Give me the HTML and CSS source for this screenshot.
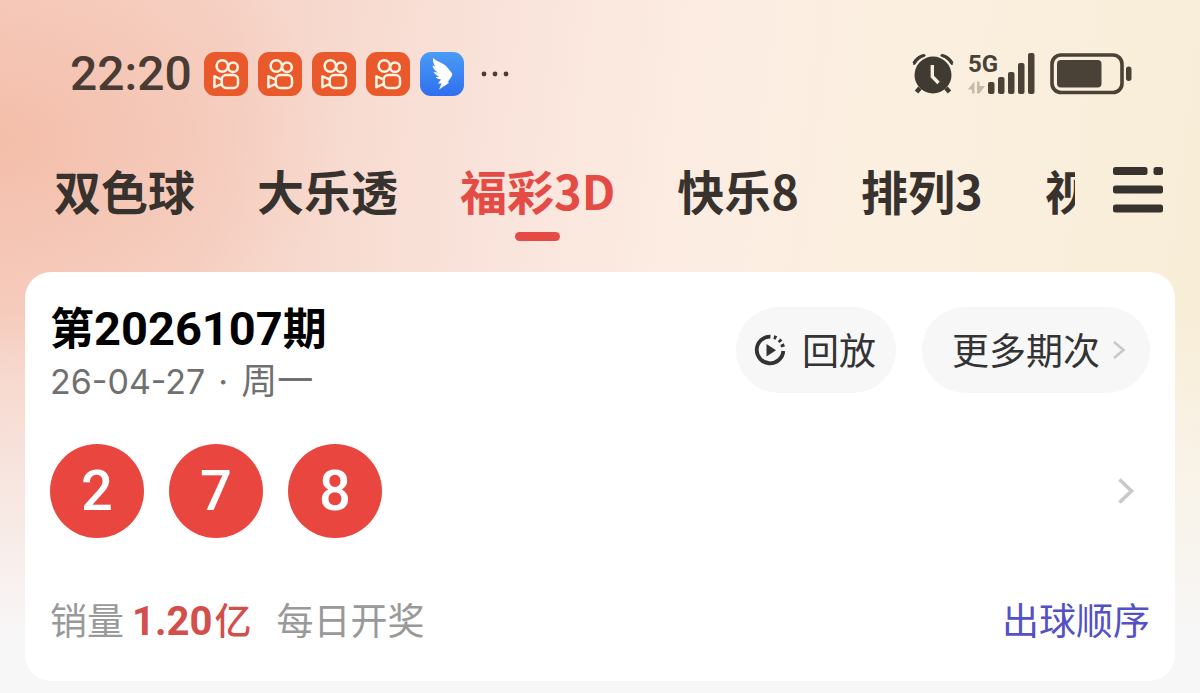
FILE: index.html
```html
<!DOCTYPE html>
<html lang="zh-CN">
<head>
<meta charset="utf-8">
<meta name="viewport" content="width=device-width, initial-scale=1">
<title>福彩3D</title>
<link rel="stylesheet" href="styles.css">
</head>
<body>
<svg width="0" height="0" class="defs" aria-hidden="true">
  <symbol id="camera" viewBox="0 0 44 44">
    <rect width="44" height="44" rx="11" fill="#e9592b"/>
    <g fill="none" stroke="#fff3e2" stroke-width="2.500" stroke-linejoin="round">
      <circle cx="18.300" cy="14" r="5.700"/>
      <circle cx="29" cy="15.300" r="4.800"/>
      <rect x="17.800" y="23" width="16.200" height="13" rx="4.400"/>
      <path d="M17.400 27.400 10.400 24.400v10.800l7-3"/>
    </g>
  </symbol>
</svg>
<header class="status">
  <div class="status-left">
    <time class="clock">22:20</time>
    <svg class="app"><use href="#camera"/></svg>
    <svg class="app"><use href="#camera"/></svg>
    <svg class="app"><use href="#camera"/></svg>
    <svg class="app"><use href="#camera"/></svg>
    <svg class="app" viewBox="0 0 44 44">
      <defs><linearGradient id="sky" x1="0" y1="0" x2="0" y2="1"><stop offset="0" stop-color="#4a9cf6"/><stop offset="1" stop-color="#2f6ff0"/></linearGradient></defs>
      <rect width="44" height="44" rx="11" fill="url(#sky)"/>
      <path fill="#fff" d="M13 6C17 9.500 24 11.500 27 15L32.200 21.500Q32.500 23 31.500 24.500L27.500 30.500H29.500L19 37.500 21.500 31.500H18L21 27.500Q17 27.300 15.500 25L19.500 24.700Q14.800 23 13.500 19.800L18 20.800Q13 17.500 12.500 13.500L15 14.500Q12.300 10 13 6Z"/>
    </svg>
    <svg class="dots" viewBox="0 0 30 6" fill="#4a3c35"><circle cx="4" cy="3" r="2.400"/><circle cx="15" cy="3" r="2.400"/><circle cx="26" cy="3" r="2.400"/></svg>
  </div>
  <div class="status-right">
    <svg class="alarm" viewBox="0 0 42 42">
      <g fill="#3f3b33">
        <circle cx="21" cy="22" r="18.500"/>
        <path d="M.8 11.500Q3.500 2 12.500 1.200L14 2.800Q6.500 5.500 2.600 12Z"/>
        <path d="M41.200 11.500Q38.500 2 29.500 1.200L28 2.800Q35.500 5.500 39.400 12Z"/>
      </g>
      <path d="M1.800 10.500Q5 3.800 12.500 2.200M40.200 10.500Q37 3.800 29.500 2.200" fill="none" stroke="#3f3b33" stroke-width="3"/>
      <path d="M8 35 4.500 39M34 35l3.500 4" stroke="#3f3b33" stroke-width="4.500"/>
      <path d="M20.300 12v11.500l6.200 6.500" fill="none" stroke="#faeedb" stroke-width="3.400"/>
    </svg>
    <svg class="signal" viewBox="0 0 68 42">
      <text x="0" y="19" class="network">5G</text>
      <g fill="#4b4237">
        <rect x="20" y="29" width="6.500" height="12" rx="2"/><rect x="30" y="24" width="6.500" height="17" rx="2"/>
        <rect x="40" y="19" width="6.500" height="22" rx="2"/><rect x="50" y="10" width="6.500" height="31" rx="2"/>
        <rect x="60" y="0" width="6.500" height="41" rx="2"/>
      </g>
      <path d="M.5 35.500 6.500 28.500v12H4V36.500H.5ZM9 28.500h2.500V33H17L11.500 40.500H9Z" fill="#c6bbab"/>
    </svg>
    <svg class="battery" viewBox="0 0 82 42">
      <rect x="2" y="2" width="70" height="37.500" rx="9" fill="none" stroke="#4b4237" stroke-width="3.600"/>
      <rect x="7" y="7" width="44.500" height="27.500" rx="4" fill="#4b4237"/>
      <rect x="76" y="13.500" width="5.500" height="14.500" rx="2.700" fill="#4b4237"/>
    </svg>
  </div>
</header>

<nav class="nav">
  <div class="tabs">
    <a class="tab" href="#ssq">双色球</a>
    <a class="tab" href="#dlt">大乐透</a>
    <a class="tab tab-active" href="#fc3d" aria-current="page">福彩3D</a>
    <a class="tab" href="#kl8">快乐8</a>
    <a class="tab" href="#pl3">排列3</a>
    <a class="tab" href="#video">视频</a>
  </div>
  <button class="menu" type="button" aria-label="全部彩种">
    <svg viewBox="0 0 52 48" fill="#37322d"><rect x="1" y="1" width="34.500" height="8" rx="2.500"/><rect x="41.500" y="1" width="9.500" height="8" rx="2.500"/><rect x="1" y="19.500" width="50" height="8" rx="2.500"/><rect x="1" y="38.500" width="50" height="8" rx="2.500"/></svg>
  </button>
</nav>

<main class="card">
  <div class="card-head">
    <div class="issue">
      <h1 class="issue-title">第<span class="issue-number">2026107</span>期</h1>
      <p class="issue-date"><span class="date-number">26-04-27</span><span class="separator">·</span>周一</p>
    </div>
    <div class="actions">
      <button class="pill" type="button">
        <svg class="replay" viewBox="0 0 32 32">
          <g fill="none" stroke="#333" stroke-width="3.800">
            <path d="M16.500 2.700A13.300 13.300 0 1 0 29.300 17"/>
            <path d="M19.800 3.100a13.300 13.300 0 0 1 2.600.9M25 5.800a13.300 13.300 0 0 1 1.800 2M28 10.200a13.300 13.300 0 0 1 1 2.800"/>
          </g>
          <path d="M12.500 10v12.500l9.500-6.300Z" fill="#333"/>
        </svg>
        <span class="pill-label">回放</span>
      </button>
      <button class="pill pill-more" type="button">
        <span class="pill-label">更多期次</span>
        <svg class="chevron-small" viewBox="0 0 14 20"><path d="M2 2l9.500 8L2 18" fill="none" stroke="#c8c8c8" stroke-width="2.600"/></svg>
      </button>
    </div>
  </div>
  <a class="result" href="#detail" aria-label="开奖详情">
    <span class="ball">2</span>
    <span class="ball">7</span>
    <span class="ball">8</span>
    <svg class="chevron" viewBox="0 0 18 28"><path d="M2.500 2.500 14.500 14 2.500 25.500" fill="none" stroke="#c8c8c8" stroke-width="3.600"/></svg>
  </a>
  <div class="card-foot">
    <span>销量</span>
    <b class="sales-number">1.20</b>
    <span class="sales-unit">亿</span>
    <span>每日开奖</span>
    <a class="order" href="#order">出球顺序</a>
  </div>
</main>
</body>
</html>
```
FILE: styles.css
```css
* { box-sizing: border-box; }

body {
  margin: 0;
  min-height: 100vh;
  font-family: "Noto Sans CJK SC", sans-serif;
  color: #333;
  background:
    linear-gradient(180deg, rgba(248, 247, 247, 0) 45%, rgba(248, 247, 247, 0.5) 68%, #f8f7f7 92%),
    radial-gradient(ellipse 340px 240px at 0 140px, rgba(242, 180, 156, 0.65), rgba(242, 180, 156, 0)),
    linear-gradient(97deg, #f7d0c3 0%, #f6d3c7 18%, #f9e2d9 38%, #fcece2 54%, #fbf0e0 72%, #f8edd6 100%);
}

a { color: inherit; text-decoration: none; }
button { border: 0; padding: 0; background: none; font: inherit; color: inherit; cursor: pointer; }
svg { display: block; flex: none; }
.defs { position: absolute; }

.status {
  display: flex;
  justify-content: space-between;
  align-items: center;
  padding: 52px 68px 0 70px;
}
.status-left, .status-right { display: flex; align-items: center; height: 44px; }
.status-left { gap: 10px; }
.clock {
  margin-right: 2px;
  font: 500 48px/44px Roboto, sans-serif;
  color: #4a3c35;
}
.app { width: 44px; height: 44px; }
.dots { width: 30px; height: 6px; margin-left: 6px; }
.status-right { gap: 14px; }
.alarm { width: 42px; height: 42px; }
.signal { width: 68px; height: 42px; overflow: visible; }
.battery { width: 82px; height: 42px; }
.network { font: 700 24px Roboto, sans-serif; fill: #4b4237; }

.nav {
  display: flex;
  align-items: flex-start;
  gap: 37px;
  padding: 59px 36px 0 54px;
}
.tabs {
  display: flex;
  flex: 1;
  min-width: 0;
  gap: 62px;
  overflow: hidden;
}
.tab {
  flex: none;
  display: flex;
  flex-direction: column;
  align-items: center;
  gap: 7px;
  font-size: 47px;
  font-weight: 700;
  line-height: 70px;
  color: #37322d;
}
.tab::after { content: ""; width: 45px; height: 9px; border-radius: 5px; }
.tab-active { color: #e44b44; }
.tab-active::after { background: #e44b44; }
.menu { flex: none; margin-top: 11px; }
.menu svg { width: 52px; height: 48px; }

.card {
  margin: 31px 25px 12px;
  padding: 28px 25px 36px;
  border-radius: 26px;
  background: #fff;
}
.card-head { display: flex; justify-content: space-between; align-items: flex-start; height: 108px; }
.issue-title, .issue-date { display: flex; align-items: baseline; margin: 0; height: 52px; line-height: 52px; }
.issue-title { font-size: 44px; font-weight: 700; color: #000; }
.issue-number { font-family: Roboto, sans-serif; font-size: 47px; }
.issue-date { font-size: 36px; color: #707070; }
.date-number, .separator { font-family: Inter, sans-serif; font-size: 34px; }
.separator { margin: 0 13px; }
.actions { display: flex; gap: 26px; padding-top: 7px; }
.pill {
  display: flex;
  align-items: center;
  gap: 16px;
  height: 86px;
  padding: 0 20px 0 18px;
  border-radius: 43px;
  background: #f7f7f7;
  font-size: 37px;
}
.pill-label { padding-bottom: 3px; }
.pill-more { gap: 12px; padding: 0 24px 0 30px; }
.replay { width: 32px; height: 32px; }
.chevron-small { width: 14px; height: 20px; }

.result { display: flex; align-items: center; gap: 25px; margin-top: 36px; }
.ball {
  display: grid;
  place-items: center;
  width: 94px;
  height: 94px;
  border-radius: 50%;
  background: #e9463f;
  color: #fff;
  font: 500 56px/94px Roboto, sans-serif;
}
.chevron { width: 18px; height: 28px; margin: 0 15px 0 auto; }

.card-foot {
  display: flex;
  align-items: baseline;
  height: 52px;
  margin-top: 55px;
  font-size: 37px;
  line-height: 52px;
  color: #999;
}
.sales-number { margin-left: 8px; font: 700 40px/52px Roboto, sans-serif; color: #d24f4b; }
.sales-unit { margin: 0 25px 0 2px; font-weight: 500; color: #d24f4b; }
.order { margin-left: auto; color: #5450c6; }
```
